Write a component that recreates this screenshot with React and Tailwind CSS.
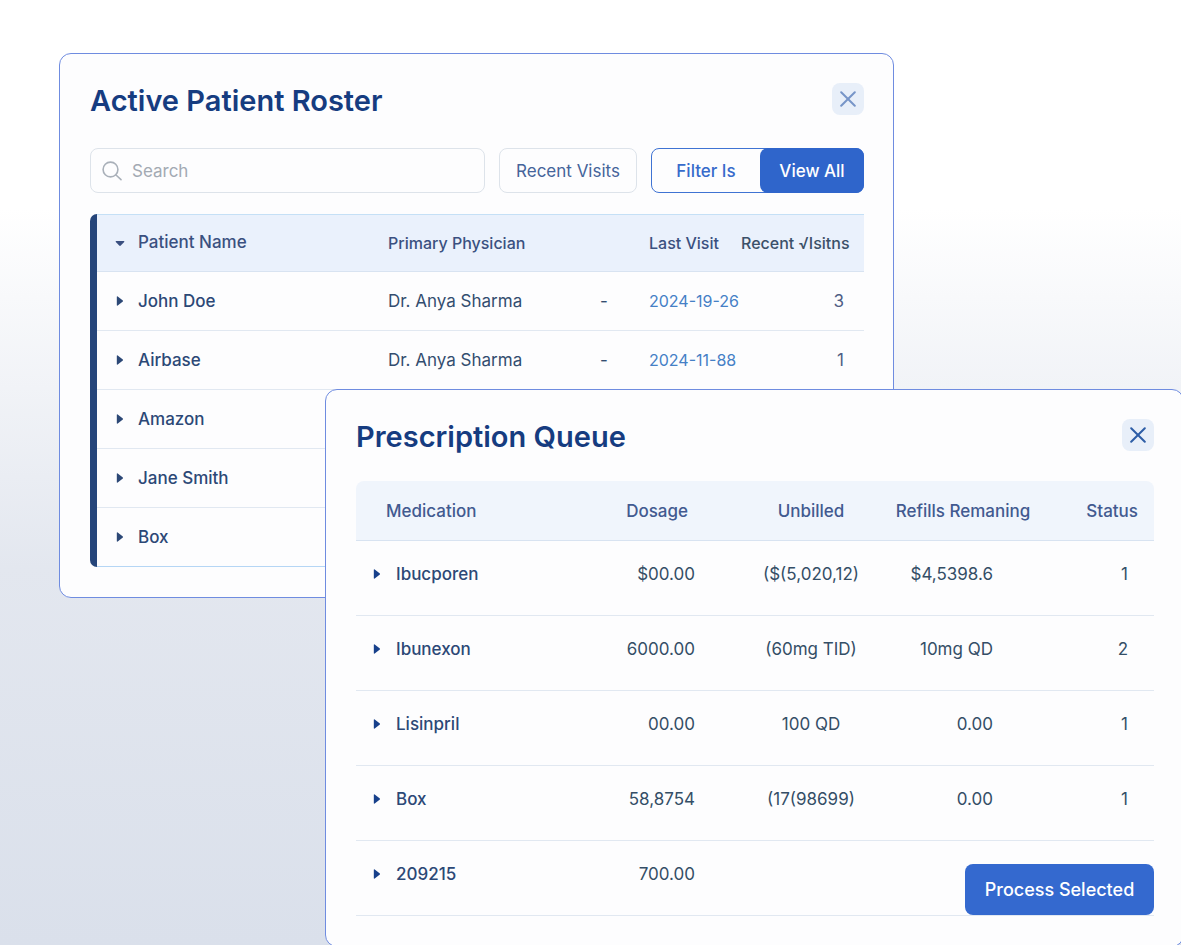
import { useState } from 'react'

const patients = [
  { name: 'John Doe', physician: 'Dr. Anya Sharma', note: '-', lastVisit: '2024-19-26', visits: 3 },
  { name: 'Airbase', physician: 'Dr. Anya Sharma', note: '-', lastVisit: '2024-11-88', visits: 1 },
  { name: 'Amazon' },
  { name: 'Jane Smith' },
  { name: 'Box' },
]

const prescriptions = [
  { name: 'Ibucporen', dosage: '$00.00', unbilled: '($(5,020,12)', refills: '$4,5398.6', status: 1 },
  { name: 'Ibunexon', dosage: '6000.00', unbilled: '(60mg TID)', refills: '10mg QD', status: 2 },
  { name: 'Lisinpril', dosage: '00.00', unbilled: '100 QD', refills: '0.00', status: 1 },
  { name: 'Box', dosage: '58,8754', unbilled: '(17(98699)', refills: '0.00', status: 1 },
  { name: '209215', dosage: '700.00' },
]

function SearchIcon() {
  return (
    <svg viewBox="0 0 20 20" className="h-5 w-5 shrink-0 text-[#a9b0b9]" fill="none" stroke="currentColor" strokeWidth="1.6" strokeLinecap="round" aria-hidden="true">
      <circle cx="8.5" cy="8.5" r="7.4" />
      <path d="M14 14l5 4.6" />
    </svg>
  )
}

function CaretRight() {
  return (
    <svg viewBox="0 0 10 10" className="h-[10px] w-[10px]" fill="currentColor" aria-hidden="true">
      <path d="M1.8 1Q1.8 0 2.7 .5L7.6 4.2Q8.5 5 7.6 5.8L2.7 9.5Q1.8 10 1.8 9Z" />
    </svg>
  )
}

function CaretDown() {
  return (
    <svg viewBox="0 0 10 10" className="h-[10px] w-[10px]" fill="currentColor" aria-hidden="true">
      <path d="M1.2 3H8.8Q9.8 3 9.2 3.9L5.8 7.6Q5 8.3 4.2 7.6L.8 3.9Q.2 3 1.2 3Z" />
    </svg>
  )
}

function CloseButton({ className }) {
  return (
    <button
      aria-label="Close"
      className={`flex h-8 w-8 items-center justify-center rounded-lg bg-[#e8eff9] ${className}`}
    >
      <svg viewBox="0 0 16 16" className="h-4 w-4" fill="none" stroke="currentColor" strokeWidth="2" strokeLinecap="round" aria-hidden="true">
        <path d="M1.2 1.2l13.6 13.6M14.8 1.2L1.2 14.8" />
      </svg>
    </button>
  )
}

function PatientRoster() {
  const [query, setQuery] = useState('')
  const cell = 'h-[59px] border-b border-[#e1e8f1]'
  const head = 'h-[58px] border-y border-t-[#c5e0f6] border-b-[#d8e3f1] text-left text-base font-medium'

  return (
    <section className="col-start-1 row-start-1 mt-[53px] mr-[287px] ml-[59px] self-start rounded-xl border border-[#6f8ce0] bg-[#fdfdfe] pt-[29px] pr-[29px] pb-[30px] pl-[30px]">
      <div className="flex h-8 items-center justify-between">
        <h2 className="pt-1 text-[29px] leading-8 font-semibold text-[#163c80]">Active Patient Roster</h2>
        <CloseButton className="text-[#7795c8]" />
      </div>

      <div className="mt-[33px] flex h-[45px] gap-[14px]">
        <label className="flex min-w-0 flex-1 items-center gap-[10px] rounded-lg border border-[#dde3ea] px-[11px]">
          <SearchIcon />
          <input
            type="text"
            aria-label="Search"
            placeholder="Search"
            value={query}
            onChange={(e) => setQuery(e.target.value)}
            className="w-full min-w-0 bg-transparent outline-none placeholder:text-[#a3aab3]"
          />
        </label>
        <button className="w-[138px] rounded-lg border border-[#dde3ea] text-[#45649a]">Recent Visits</button>
        <div className="flex w-[213px] rounded-lg border border-[#3f73d3]">
          <button className="flex-1 font-medium text-[#376bcb]">Filter Is</button>
          <button className="-my-px -mr-px w-[104px] rounded-lg bg-[#2f65cb] font-medium text-white">View All</button>
        </div>
      </div>

      <div className="mt-[21px] flex">
        <div className="w-[7px] shrink-0 rounded-l-lg bg-[#25457a]" />
        <table className="w-full table-fixed border-separate border-spacing-0">
          <colgroup>
            <col />
            <col className="w-[212px]" />
            <col className="w-[49px]" />
            <col className="w-[92px]" />
            <col className="w-[123px]" />
          </colgroup>
          <thead className="bg-[#eaf1fc] text-[#3a5080]">
            <tr>
              <th className={head}>
                <button className="flex items-center gap-[13px] pl-[18px] text-[17px] font-medium">
                  <CaretDown />
                  Patient Name
                </button>
              </th>
              <th className={head}>Primary Physician</th>
              <th className={head} />
              <th className={head}>Last Visit</th>
              <th className={`${head} whitespace-nowrap text-[#3b5069]`}>Recent √Isitns</th>
            </tr>
          </thead>
          <tbody className="text-[#334d6f]">
            {patients.map((p, i) => {
              const line = i === patients.length - 1 ? 'h-[59px] border-b border-[#b5d6f5]' : cell
              return (
                <tr key={p.name}>
                  <td className={line}>
                    <button className="flex items-center gap-[13px] pl-[18px] font-medium text-[#2c4876]">
                      <CaretRight />
                      {p.name}
                    </button>
                  </td>
                  <td className={line}>{p.physician}</td>
                  <td className={line}>{p.note}</td>
                  <td className={`${line} text-base whitespace-nowrap text-[#4580c6]`}>{p.lastVisit}</td>
                  <td className={`${line} pr-5 text-right text-[#4f5d85]`}>{p.visits}</td>
                </tr>
              )
            })}
          </tbody>
        </table>
      </div>
    </section>
  )
}

function PrescriptionQueue() {
  const cell = 'h-[75px] border-b border-[#e1e8f1] pb-[9px]'
  const head = 'h-[60px] border-b border-[#d8e3f1] bg-[#f0f5fc] font-medium whitespace-nowrap'

  return (
    <section className="z-10 col-start-1 row-start-1 mt-[389px] -mr-[3px] ml-[325px] self-start rounded-xl border border-[#6f8ce0] bg-[#fdfdfe] pt-[29px] pr-[29px] pb-[30px] pl-[30px]">
      <div className="flex h-8 items-center justify-between">
        <h2 className="pt-1 text-[29px] leading-8 font-semibold text-[#163c80]">Prescription Queue</h2>
        <CloseButton className="text-[#2d5da6]" />
      </div>

      <div className="relative mt-[30px]">
        <table className="w-full table-fixed border-separate border-spacing-0">
          <colgroup>
            <col />
            <col className="w-[152px]" />
            <col className="w-[118px]" />
            <col className="w-[186px]" />
            <col className="w-[98px]" />
          </colgroup>
          <thead className="text-[#425a90]">
            <tr>
              <th className={`${head} rounded-tl-lg pl-[30px] text-left`}>Medication</th>
              <th className={`${head} pr-[64px] text-right`}>Dosage</th>
              <th className={`${head} text-center`}>Unbilled</th>
              <th className={`${head} text-center`}>Refills Remaning</th>
              <th className={`${head} rounded-tr-lg pr-4 text-right`}>Status</th>
            </tr>
          </thead>
          <tbody className="text-[#344e66]">
            {prescriptions.map((p) => (
              <tr key={p.name}>
                <td className={cell}>
                  <button className="flex items-center gap-[14px] pl-4 font-medium text-[#2c4876]">
                    <span className="text-[#17408b]"><CaretRight /></span>
                    {p.name}
                  </button>
                </td>
                <td className={`${cell} pr-[57px] text-right`}>{p.dosage}</td>
                <td className={`${cell} text-center whitespace-nowrap`}>{p.unbilled}</td>
                <td className={`${cell} pr-[63px] text-right whitespace-nowrap`}>{p.refills}</td>
                <td className={`${cell} pr-[26px] text-right`}>{p.status}</td>
              </tr>
            ))}
          </tbody>
        </table>
        <button className="absolute right-0 bottom-px h-[51px] w-[189px] rounded-lg bg-[#3469cf] text-lg font-medium text-white">
          Process Selected
        </button>
      </div>
    </section>
  )
}

export default function App() {
  return (
    <main className="grid min-h-screen grid-cols-1 overflow-hidden bg-linear-to-b from-white from-22% via-[#e3e7ef] via-60% to-[#dae0eb] font-[Inter,sans-serif] text-[17px] leading-6">
      <PatientRoster />
      <PrescriptionQueue />
    </main>
  )
}
